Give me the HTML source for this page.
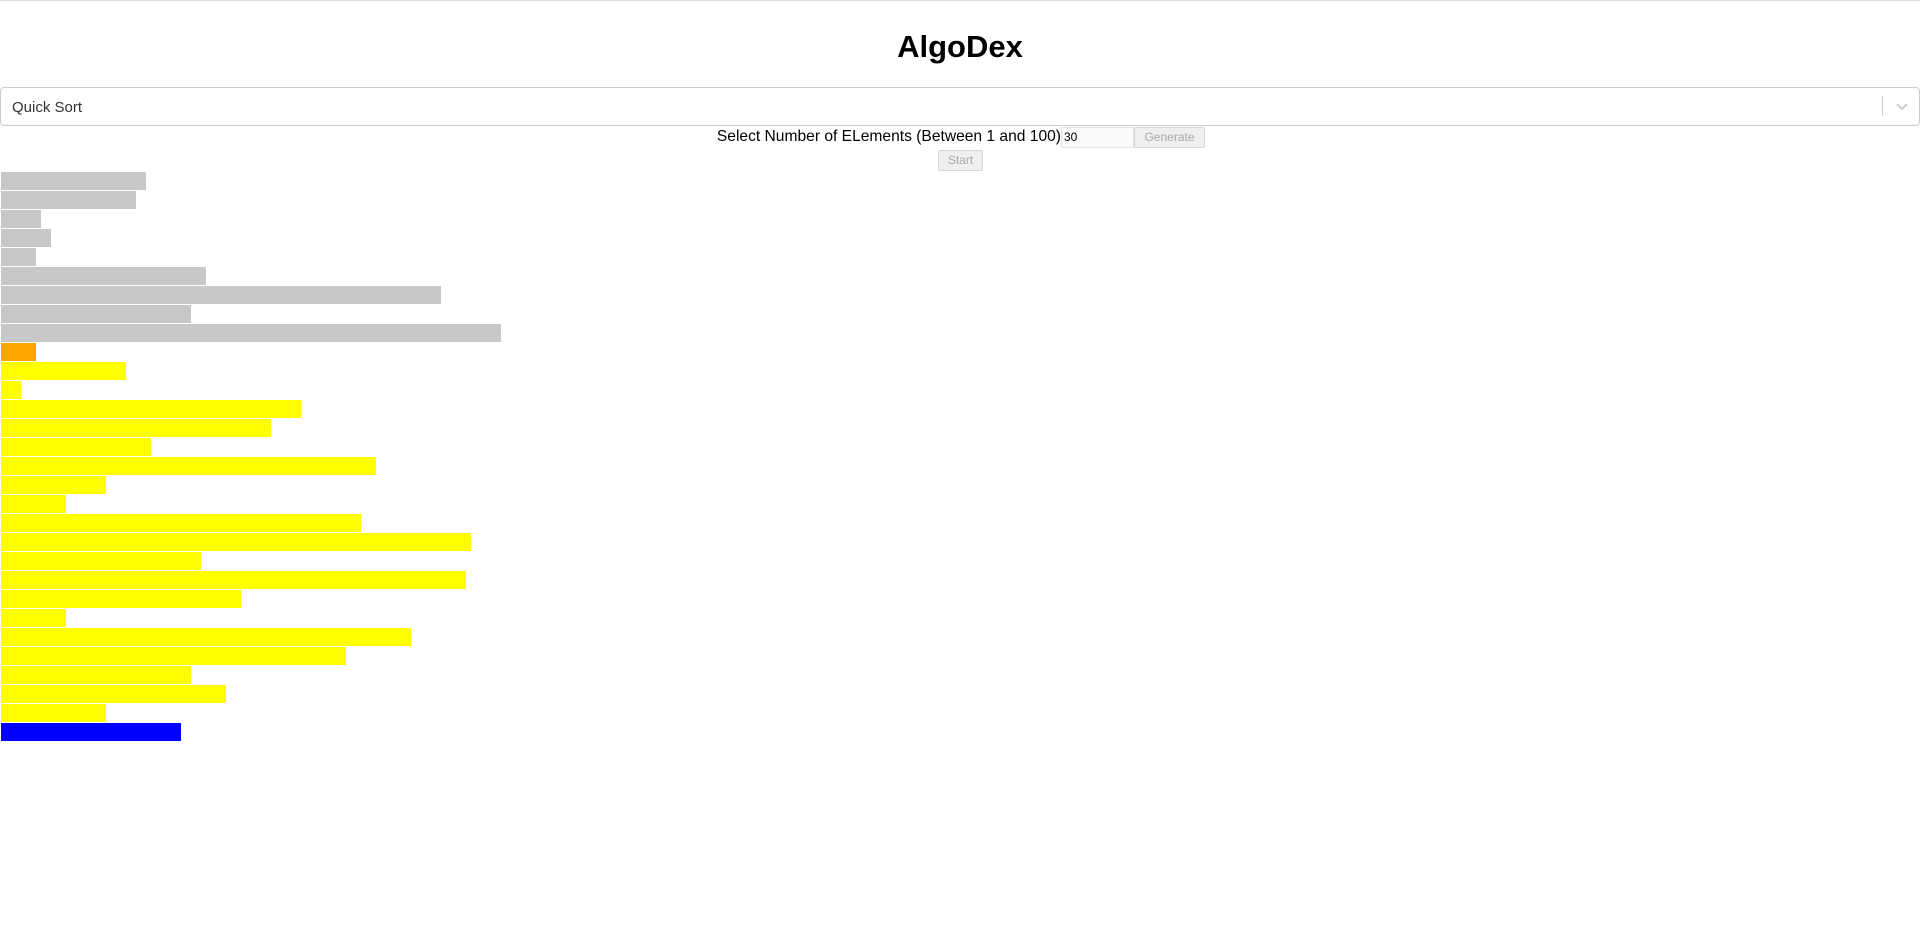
<!DOCTYPE html>
<html><head><meta charset="utf-8"><style>
html,body{margin:0;padding:0;background:#fff;width:1920px;height:938px;overflow:hidden;font-family:"Liberation Sans",sans-serif;}
.top{position:absolute;left:0;top:0;width:1920px;height:1px;background:#dcdcdc;}
h1{position:absolute;left:0;top:27px;width:1920px;margin:0;text-align:center;font-size:31px;font-weight:bold;color:#000;line-height:40px;}
.sel{position:absolute;left:0;top:87px;width:1918px;height:37px;border:1px solid #ccc;border-radius:4px;}
.sel span{position:absolute;left:11px;top:11px;font-size:15px;color:#333;}
.sep{position:absolute;left:1881px;top:8px;width:1px;height:20px;background:#ccc;}
.chev{position:absolute;left:1893px;top:10px;}
.txt{position:absolute;left:700px;top:128px;width:361px;font-size:15.6px;white-space:nowrap;text-align:right;}
.inp{position:absolute;left:1061px;top:127px;width:69px;height:19px;border:1px solid #e3e3e3;background:#fafafa;font-size:12px;line-height:19px;padding-left:2px;box-sizing:content-box;}
.btn{position:absolute;height:19px;border:1px solid #d6d6d6;border-radius:2px;background:#efefef;color:#a9a9a9;font-size:12px;line-height:19px;text-align:center;}
.bar{position:absolute;left:1px;height:18px;}
.g{background:#c8c8c8}.o{background:#ffa500}.y{background:#ffff00}.b{background:#0000ff}
</style></head><body>
<div class="top"></div>
<h1>AlgoDex</h1>
<div class="sel"><span>Quick Sort</span><div class="sep"></div>
<svg class="chev" width="16" height="16" viewBox="0 0 16 16"><path d="M3 6 L8 11 L13 6" fill="none" stroke="#ccc" stroke-width="2"/></svg></div>
<div class="txt">Select Number of ELements (Between 1 and 100)</div>
<div class="inp">30</div>
<div class="btn" style="left:1134px;top:127px;width:69px;">Generate</div>
<div class="btn" style="left:938px;top:150px;width:43px;">Start</div>
<div class="bar g" style="top:172px;width:145px"></div>
<div class="bar g" style="top:191px;width:135px"></div>
<div class="bar g" style="top:210px;width:40px"></div>
<div class="bar g" style="top:229px;width:50px"></div>
<div class="bar g" style="top:248px;width:35px"></div>
<div class="bar g" style="top:267px;width:205px"></div>
<div class="bar g" style="top:286px;width:440px"></div>
<div class="bar g" style="top:305px;width:190px"></div>
<div class="bar g" style="top:324px;width:500px"></div>
<div class="bar o" style="top:343px;width:35px"></div>
<div class="bar y" style="top:362px;width:125px"></div>
<div class="bar y" style="top:381px;width:20px"></div>
<div class="bar y" style="top:400px;width:300px"></div>
<div class="bar y" style="top:419px;width:270px"></div>
<div class="bar y" style="top:438px;width:150px"></div>
<div class="bar y" style="top:457px;width:375px"></div>
<div class="bar y" style="top:476px;width:105px"></div>
<div class="bar y" style="top:495px;width:65px"></div>
<div class="bar y" style="top:514px;width:360px"></div>
<div class="bar y" style="top:533px;width:470px"></div>
<div class="bar y" style="top:552px;width:200px"></div>
<div class="bar y" style="top:571px;width:465px"></div>
<div class="bar y" style="top:590px;width:240px"></div>
<div class="bar y" style="top:609px;width:65px"></div>
<div class="bar y" style="top:628px;width:410px"></div>
<div class="bar y" style="top:647px;width:345px"></div>
<div class="bar y" style="top:666px;width:190px"></div>
<div class="bar y" style="top:685px;width:225px"></div>
<div class="bar y" style="top:704px;width:105px"></div>
<div class="bar b" style="top:723px;width:180px"></div>
</body></html>
